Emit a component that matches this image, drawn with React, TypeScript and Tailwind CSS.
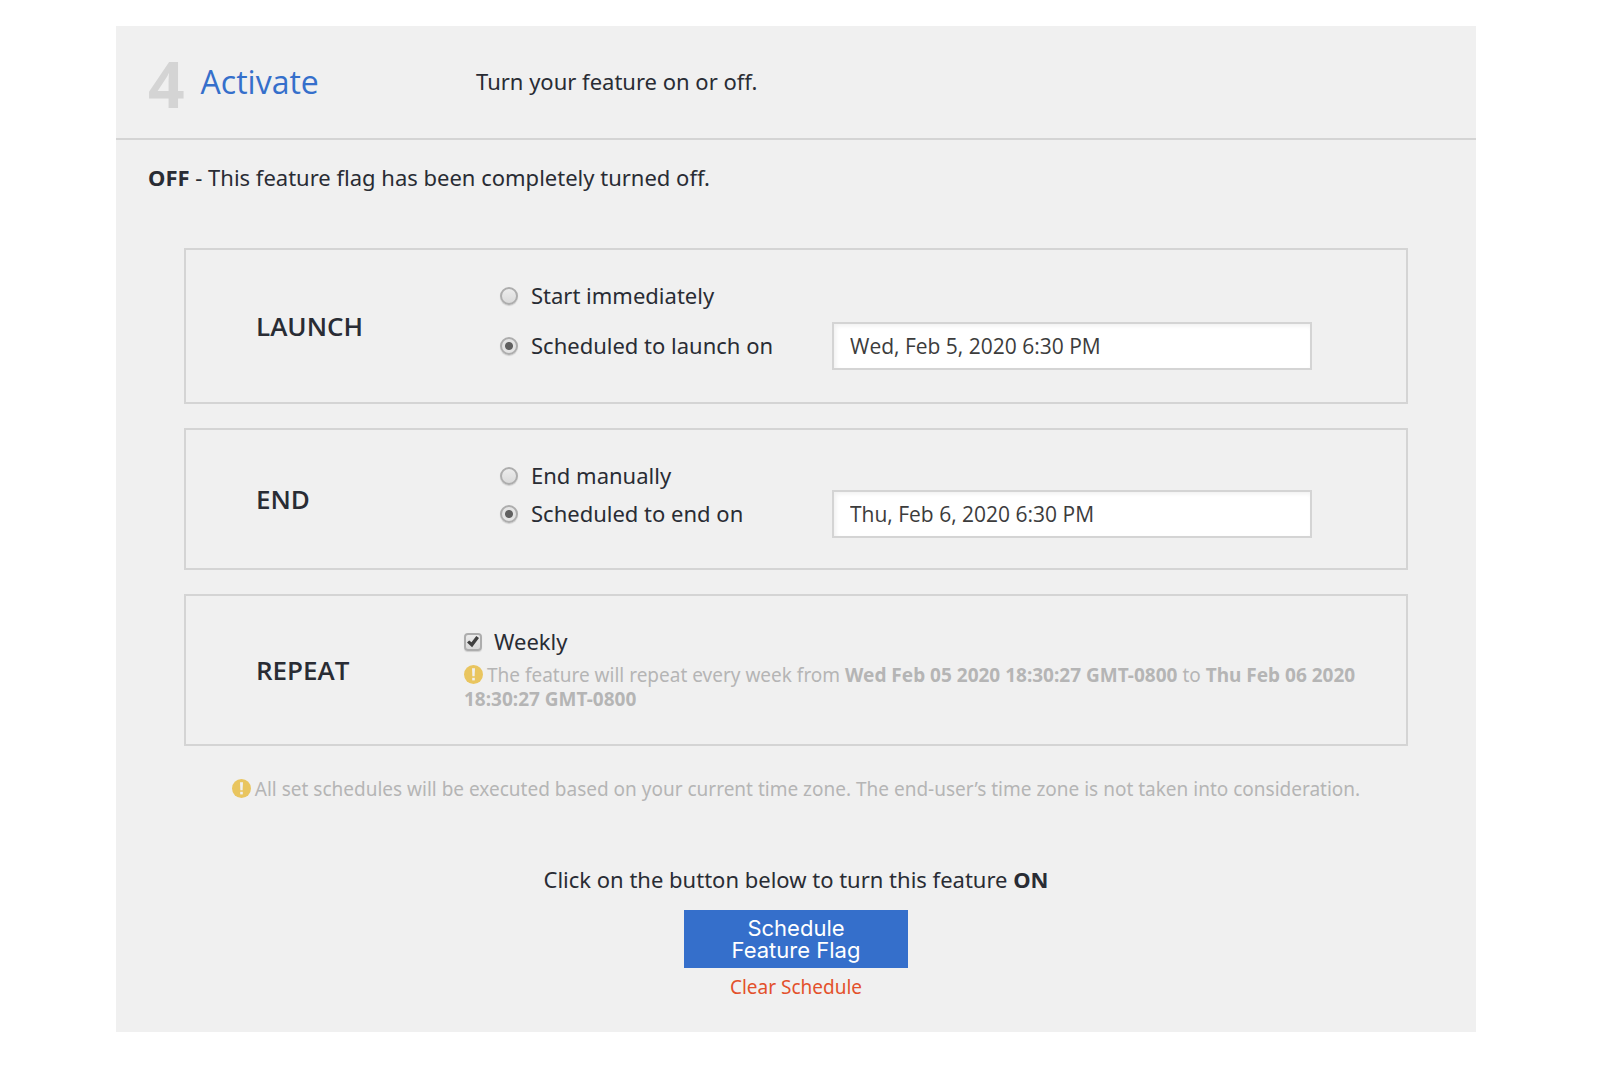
import { useState } from "react";
import type { ReactNode } from "react";

const WarningIcon = () => (
  <svg
    viewBox="0 0 19 19"
    className="mr-1 inline-block h-[19px] w-[19px] align-[-2px]"
    aria-hidden="true"
  >
    <circle cx="9.5" cy="9.5" r="9.5" fill="#e9c55f" />
    <path d="M8 3.2h3l-.4 8H8.4z" fill="#f0f0f0" />
    <rect x="8.2" y="12.8" width="2.6" height="2.6" fill="#f0f0f0" />
  </svg>
);

type RadioProps = {
  id: string;
  name: string;
  checked: boolean;
  onChange: () => void;
  children: ReactNode;
};

const Radio = ({ id, name, checked, onChange, children }: RadioProps) => (
  <div className="flex h-7 items-center gap-[13px]">
    <input
      type="radio"
      id={id}
      name={name}
      checked={checked}
      onChange={onChange}
      className="h-[18px] w-[18px] shrink-0 appearance-none rounded-full border-2 border-[#adadad] bg-linear-to-b from-[#ececec] to-[#dadada] shadow-[0_1px_1px_rgba(0,0,0,0.14)] checked:bg-[radial-gradient(circle,#606060_3.5px,#e4e4e4_4.5px)] checked:bg-origin-border"
    />
    <label htmlFor={id} className="pb-0.5">
      {children}
    </label>
  </div>
);

type DateInputProps = {
  label: string;
  value: string;
  onChange: (value: string) => void;
};

const DateInput = ({ label, value, onChange }: DateInputProps) => (
  <input
    type="text"
    aria-label={label}
    value={value}
    onChange={(e) => onChange(e.target.value)}
    className="h-12 w-full border-2 border-[#d4d4d4] bg-white px-4 font-['Open_Sans',sans-serif] text-[21px] text-[#3c3c3c] shadow-[inset_2px_2px_4px_rgba(0,0,0,0.06)] outline-none"
  />
);

const Section = ({ title, children }: { title: string; children: ReactNode }) => (
  <section className="flex items-center border-2 border-[#d4d4d4] pl-[70px]">
    <h3 className="w-52 shrink-0 font-['Open_Sans',sans-serif] text-[26px] font-semibold">
      {title}
    </h3>
    <div className="min-w-0 flex-1">{children}</div>
  </section>
);

const App = () => {
  const [launchMode, setLaunchMode] = useState("scheduled");
  const [endMode, setEndMode] = useState("scheduled");
  const [launchDate, setLaunchDate] = useState("Wed, Feb 5, 2020 6:30 PM");
  const [endDate, setEndDate] = useState("Thu, Feb 6, 2020 6:30 PM");
  const [weekly, setWeekly] = useState(true);

  return (
    <div className="min-h-screen bg-white pt-[26px] pr-31 pl-29 font-['Noto_Sans','Open_Sans',sans-serif] text-[22px] leading-[26px] text-[#292c34]">
      <main className="bg-[#f0f0f0] pb-[34px]">
        <header className="flex h-[114px] items-center border-b-2 border-[#d4d4d4] px-8">
          <div className="flex w-82 shrink-0 items-center gap-4 font-['Open_Sans',sans-serif]">
            <span className="pt-1 text-[64px] leading-none font-bold text-[#d4d4d4]">4</span>
            <h2 className="text-[32px] text-[#356fcb]">Activate</h2>
          </div>
          <p className="pb-0.5">Turn your feature on or off.</p>
        </header>

        <p className="px-8 pt-6">
          <strong>OFF</strong> - This feature flag has been completely turned off.
        </p>

        <div className="mx-auto mt-[58px] flex w-[90%] flex-col gap-6">
          <Section title="LAUNCH">
            <div className="py-8 pr-[94px] pl-9">
              <Radio
                id="launch-now"
                name="launch"
                checked={launchMode === "now"}
                onChange={() => setLaunchMode("now")}
              >
                Start immediately
              </Radio>
              <div className="mt-3 grid grid-cols-[332px_1fr] items-center">
                <Radio
                  id="launch-scheduled"
                  name="launch"
                  checked={launchMode === "scheduled"}
                  onChange={() => setLaunchMode("scheduled")}
                >
                  Scheduled to launch on
                </Radio>
                <DateInput label="Launch date" value={launchDate} onChange={setLaunchDate} />
              </div>
            </div>
          </Section>

          <Section title="END">
            <div className="pt-8 pr-[94px] pb-[30px] pl-9">
              <Radio
                id="end-manual"
                name="end"
                checked={endMode === "manual"}
                onChange={() => setEndMode("manual")}
              >
                End manually
              </Radio>
              <div className="grid grid-cols-[332px_1fr] items-center">
                <Radio
                  id="end-scheduled"
                  name="end"
                  checked={endMode === "scheduled"}
                  onChange={() => setEndMode("scheduled")}
                >
                  Scheduled to end on
                </Radio>
                <DateInput label="End date" value={endDate} onChange={setEndDate} />
              </div>
            </div>
          </Section>

          <Section title="REPEAT">
            <div className="pt-8 pr-8 pb-[33px]">
              <div className="flex h-7 items-center gap-3">
                <span className="relative h-[18px] w-[18px] shrink-0">
                  <input
                    type="checkbox"
                    id="weekly"
                    checked={weekly}
                    onChange={(e) => setWeekly(e.target.checked)}
                    className="peer block h-[18px] w-[18px] appearance-none rounded-[4px] border-2 border-[#adadad] bg-linear-to-b from-[#ececec] to-[#dadada] shadow-[0_1px_1px_rgba(0,0,0,0.14)]"
                  />
                  <svg
                    viewBox="0 0 18 18"
                    className="pointer-events-none absolute inset-0 hidden h-[18px] w-[18px] peer-checked:block"
                    aria-hidden="true"
                  >
                    <path d="M3 9.6l2.2-2.2 2.3 1.8 4.8-6.2 2.7 1.9-6.9 9.3z" fill="#404040" />
                  </svg>
                </span>
                <label htmlFor="weekly" className="pb-0.5">
                  Weekly
                </label>
              </div>
              <p className="mt-[7px] text-[19px] leading-6 text-[#b5b5b5]">
                <WarningIcon />
                The feature will repeat every week from{" "}
                <strong>Wed Feb 05 2020 18:30:27 GMT-0800</strong> to{" "}
                <strong>Thu Feb 06 2020 18:30:27 GMT-0800</strong>
              </p>
            </div>
          </Section>
        </div>

        <p className="mt-[31px] text-center text-[19px] leading-6 text-[#b5b5b5]">
          <WarningIcon />
          All set schedules will be executed based on your current time zone. The end-user’s
          time zone is not taken into consideration.
        </p>

        <div className="mt-[65px] flex flex-col items-center">
          <p>
            Click on the button below to turn this feature <strong>ON</strong>
          </p>
          <button
            type="button"
            className="mt-[18px] w-56 bg-[#356fcb] px-10 py-[7px] font-['Inter',sans-serif] text-[22px] leading-[22px] text-white"
          >
            Schedule Feature Flag
          </button>
          <a href="#" className="mt-[7px] -mb-px text-[19px] leading-6 text-[#e3502b]">
            Clear Schedule
          </a>
        </div>
      </main>
    </div>
  );
};

export default App;
